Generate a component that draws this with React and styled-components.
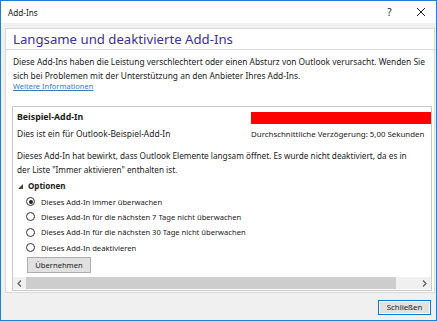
import React from 'react'
import styled, { createGlobalStyle } from 'styled-components'

const Global = createGlobalStyle`
  html, body { margin: 0; padding: 0; }
  body { font-family: "Noto Sans", "Open Sans", sans-serif; color: #1a1a1a; }
`

const options = [
  'Dieses Add-In immer überwachen',
  'Dieses Add-In für die nächsten 7 Tage nicht überwachen',
  'Dieses Add-In für die nächsten 30 Tage nicht überwachen',
  'Dieses Add-In deaktivieren',
]

function App() {
  return (
    <>
      <Global />
      <Window>
        <TitleBar>
          <Title>Add-Ins</Title>
          <TitleButtons>
            <TitleBtn>?</TitleBtn>
            <TitleBtn>
              <svg width="10" height="10" viewBox="0 0 10 10">
                <path d="M1 1 L9 9 M9 1 L1 9" stroke="#222" strokeWidth="1" />
              </svg>
            </TitleBtn>
          </TitleButtons>
        </TitleBar>
        <Body>
          <Panel>
            <Heading>Langsame und deaktivierte Add-Ins</Heading>
            <Content>
              <Description>
                <Line>Diese Add-Ins haben die Leistung verschlechtert oder einen Absturz von Outlook verursacht. Wenden Sie</Line>
                <Line>sich bei Problemen mit der Unterstützung an den Anbieter Ihres Add-Ins.</Line>
              </Description>
              <Link>Weitere Informationen</Link>
              <AddInBox>
                <AddInInner>
                  <TopRow>
                    <LeftCol>
                      <AddInName>Beispiel-Add-In</AddInName>
                      <AddInDesc>Dies ist ein für Outlook-Beispiel-Add-In</AddInDesc>
                    </LeftCol>
                    <RightCol>
                      <DelayBar />
                      <DelayText>Durchschnittliche Verzögerung: 5,00 Sekunden</DelayText>
                    </RightCol>
                  </TopRow>
                  <Paragraph>
                    <Line>Dieses Add-In hat bewirkt, dass Outlook Elemente langsam öffnet. Es wurde nicht deaktiviert, da es in</Line>
                    <Line>der Liste "Immer aktivieren" enthalten ist.</Line>
                  </Paragraph>
                  <OptionsHeader>
                    <svg width="5" height="5" viewBox="0 0 5 5">
                      <path d="M5 0 L5 5 L0 5 Z" fill="#444" />
                    </svg>
                    Optionen
                  </OptionsHeader>
                  <RadioList>
                    {options.map((o, i) => (
                      <RadioRow key={o}>
                        <Radio $checked={i === 0} />
                        {o}
                      </RadioRow>
                    ))}
                  </RadioList>
                  <ApplyButton>Übernehmen</ApplyButton>
                </AddInInner>
                <ScrollBar>
                  <Arrow>
                    <svg width="5" height="7" viewBox="0 0 5 7">
                      <path d="M4 0.5 L1 3.5 L4 6.5" stroke="#555" strokeWidth="1.1" fill="none" />
                    </svg>
                  </Arrow>
                  <Thumb />
                  <Arrow>
                    <svg width="5" height="7" viewBox="0 0 5 7">
                      <path d="M1 0.5 L4 3.5 L1 6.5" stroke="#555" strokeWidth="1.1" fill="none" />
                    </svg>
                  </Arrow>
                </ScrollBar>
              </AddInBox>
            </Content>
          </Panel>
          <Footer>
            <CloseButton>Schließen</CloseButton>
          </Footer>
        </Body>
      </Window>
    </>
  )
}

export default App

const Window = styled.div`
  width: 437px;
  height: 321px;
  box-sizing: border-box;
  border: 1px solid #1c80d6;
  display: flex;
  flex-direction: column;
  background: #f0f0f0;
  overflow: hidden;
`

const TitleBar = styled.div`
  height: 22px;
  flex: none;
  background: #fff;
  display: flex;
  align-items: center;
  justify-content: space-between;
  padding-left: 7px;
`

const Title = styled.div`
  font-size: 8.2px;
`

const TitleButtons = styled.div`
  display: flex;
  align-items: center;
`

const TitleBtn = styled.div`
  width: 31px;
  height: 22px;
  display: flex;
  align-items: center;
  justify-content: center;
  font-size: 10px;
  color: #222;
`

const Body = styled.div`
  flex: 1;
  display: flex;
  flex-direction: column;
  padding: 5px 1px 0 4px;
`

const Panel = styled.div`
  background: #fff;
  border: 1px solid #d9d9d9;
  display: flex;
  flex-direction: column;
  height: 265px;
  box-sizing: border-box;
  flex: none;
`

const Heading = styled.div`
  height: 20px;
  flex: none;
  border-bottom: 1px solid #d9d9d9;
  padding-left: 7px;
  font-size: 13.2px;
  line-height: 20px;
  color: #3a2fa3;
`

const Content = styled.div`
  flex: 1;
  display: flex;
  flex-direction: column;
  padding: 5px 2px 0 7px;
  min-height: 0;
`

const Line = styled.div`
  white-space: nowrap;
`

const Description = styled.div`
  font-size: 8.4px;
  line-height: 14px;
`

const Link = styled.div`
  font-size: 7.5px;
  color: #3b79c2;
  text-decoration: underline;
  margin-top: -2px;
  line-height: 10px;
`

const AddInBox = styled.div`
  margin: 15px 0 0 -1px;
  height: 185px;
  box-sizing: border-box;
  flex: none;
  border: 1px solid #c8c8c8;
  display: flex;
  flex-direction: column;
  overflow: hidden;
`

const AddInInner = styled.div`
  flex: 1;
  padding: 3px 0 0 4px;
  display: flex;
  flex-direction: column;
  min-height: 0;
`

const TopRow = styled.div`
  display: flex;
  justify-content: space-between;
`

const LeftCol = styled.div`
  display: flex;
  flex-direction: column;
`

const RightCol = styled.div`
  width: 183px;
  flex: none;
  margin-right: -3px;
  display: flex;
  flex-direction: column;
  padding-top: 2px;
`

const AddInName = styled.div`
  font-size: 8.8px;
  font-weight: 700;
  line-height: 14px;
`

const AddInDesc = styled.div`
  font-size: 8.45px;
  line-height: 14px;
  margin-top: 3px;
  white-space: nowrap;
`

const DelayBar = styled.div`
  height: 12px;
  background: #ff0000;
`

const DelayText = styled.div`
  font-size: 7.9px;
  line-height: 12px;
  margin-top: 4px;
  white-space: nowrap;
`

const Paragraph = styled.div`
  font-size: 8.2px;
  line-height: 14px;
  margin-top: 8px;
`

const OptionsHeader = styled.div`
  font-size: 8px;
  font-weight: 700;
  display: flex;
  align-items: center;
  gap: 5px;
  margin-top: 2px;
  padding-left: 1px;
  line-height: 14px;
`

const RadioList = styled.div`
  display: flex;
  flex-direction: column;
  margin-top: 1px;
  padding-left: 9px;
`

const RadioRow = styled.div`
  display: flex;
  align-items: center;
  gap: 6px;
  font-size: 7.6px;
  height: 15.3px;
  white-space: nowrap;
`

const Radio = styled.span`
  width: 9px;
  height: 9px;
  border-radius: 50%;
  border: 1px solid #333;
  box-sizing: border-box;
  position: relative;
  flex: none;
  &::after {
    content: '';
    display: ${p => (p.$checked ? 'block' : 'none')};
    position: absolute;
    left: 1.5px;
    top: 1.5px;
    width: 4px;
    height: 4px;
    border-radius: 50%;
    background: #222;
  }
`

const ApplyButton = styled.div`
  align-self: flex-start;
  margin: 2px 0 0 10px;
  width: 64px;
  height: 16px;
  box-sizing: border-box;
  border: 1px solid #adadad;
  background: #e1e1e1;
  font-size: 7.6px;
  display: flex;
  align-items: center;
  justify-content: center;
`

const ScrollBar = styled.div`
  height: 12px;
  flex: none;
  margin-bottom: 1px;
  background: #f0f0f0;
  display: flex;
  align-items: center;
`

const Arrow = styled.div`
  width: 13px;
  height: 12px;
  display: flex;
  align-items: center;
  justify-content: center;
`

const Thumb = styled.div`
  flex: 1;
  height: 12px;
  background: #cdcdcd;
  margin-right: 22px;
`

const Footer = styled.div`
  flex: 1;
  display: flex;
  justify-content: flex-end;
  align-items: center;
  padding-right: 4px;
`

const CloseButton = styled.div`
  width: 53px;
  height: 15px;
  box-sizing: border-box;
  border: 1px solid #0078d7;
  box-shadow: inset 0 0 0 1px #fff;
  background: #e1e1e1;
  font-size: 7.8px;
  display: flex;
  align-items: center;
  justify-content: center;
  margin-top: 1px;
`
